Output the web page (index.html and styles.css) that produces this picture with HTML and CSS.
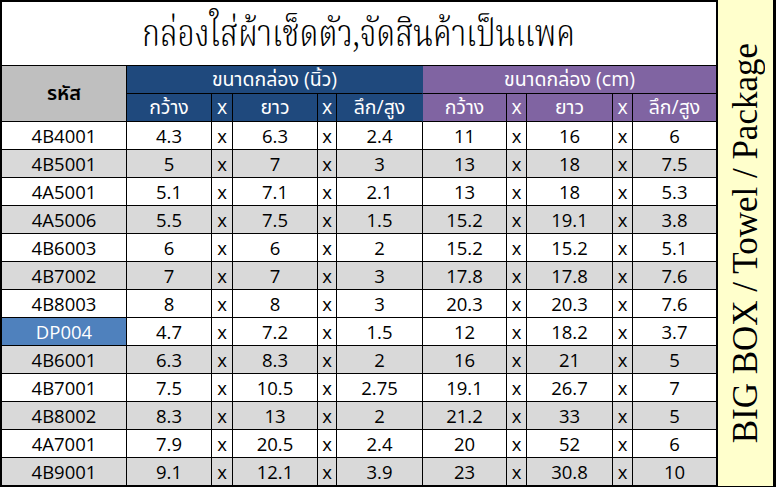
FILE: index.html
```html
<!DOCTYPE html>
<html lang="th">
<head>
<meta charset="utf-8">
<title>กล่องใส่ผ้าเช็ดตัว</title>
<link rel="stylesheet" href="styles.css">
</head>
<body>
<div class="sheet">
  <div class="grid">
    <div class="title"><span class="title-text">กล่องใส่ผ้าเช็ดตัว,จัดสินค้าเป็นแพค</span></div>

    <div class="hd code-hd">รหัส</div>
    <div class="hd blue group">ขนาดกล่อง (นิ้ว)</div>
    <div class="hd purple group last">ขนาดกล่อง (cm)</div>

    <div class="hd blue">กว้าง</div>
    <div class="hd blue">x</div>
    <div class="hd blue">ยาว</div>
    <div class="hd blue">x</div>
    <div class="hd blue join">ลึก/สูง</div>
    <div class="hd purple">กว้าง</div>
    <div class="hd purple">x</div>
    <div class="hd purple">ยาว</div>
    <div class="hd purple">x</div>
    <div class="hd purple last">ลึก/สูง</div>

    <div class="c">4B4001</div><div class="c">4.3</div><div class="c">x</div><div class="c">6.3</div><div class="c">x</div><div class="c">2.4</div><div class="c">11</div><div class="c">x</div><div class="c">16</div><div class="c">x</div><div class="c last">6</div>
    <div class="c g">4B5001</div><div class="c g">5</div><div class="c g">x</div><div class="c g">7</div><div class="c g">x</div><div class="c g">3</div><div class="c g">13</div><div class="c g">x</div><div class="c g">18</div><div class="c g">x</div><div class="c g last">7.5</div>
    <div class="c">4A5001</div><div class="c">5.1</div><div class="c">x</div><div class="c">7.1</div><div class="c">x</div><div class="c">2.1</div><div class="c">13</div><div class="c">x</div><div class="c">18</div><div class="c">x</div><div class="c last">5.3</div>
    <div class="c g">4A5006</div><div class="c g">5.5</div><div class="c g">x</div><div class="c g">7.5</div><div class="c g">x</div><div class="c g">1.5</div><div class="c g">15.2</div><div class="c g">x</div><div class="c g">19.1</div><div class="c g">x</div><div class="c g last">3.8</div>
    <div class="c">4B6003</div><div class="c">6</div><div class="c">x</div><div class="c">6</div><div class="c">x</div><div class="c">2</div><div class="c">15.2</div><div class="c">x</div><div class="c">15.2</div><div class="c">x</div><div class="c last">5.1</div>
    <div class="c g">4B7002</div><div class="c g">7</div><div class="c g">x</div><div class="c g">7</div><div class="c g">x</div><div class="c g">3</div><div class="c g">17.8</div><div class="c g">x</div><div class="c g">17.8</div><div class="c g">x</div><div class="c g last">7.6</div>
    <div class="c">4B8003</div><div class="c">8</div><div class="c">x</div><div class="c">8</div><div class="c">x</div><div class="c">3</div><div class="c">20.3</div><div class="c">x</div><div class="c">20.3</div><div class="c">x</div><div class="c last">7.6</div>
    <div class="c hl">DP004</div><div class="c">4.7</div><div class="c">x</div><div class="c">7.2</div><div class="c">x</div><div class="c">1.5</div><div class="c">12</div><div class="c">x</div><div class="c">18.2</div><div class="c">x</div><div class="c last">3.7</div>
    <div class="c g">4B6001</div><div class="c g">6.3</div><div class="c g">x</div><div class="c g">8.3</div><div class="c g">x</div><div class="c g">2</div><div class="c g">16</div><div class="c g">x</div><div class="c g">21</div><div class="c g">x</div><div class="c g last">5</div>
    <div class="c">4B7001</div><div class="c">7.5</div><div class="c">x</div><div class="c">10.5</div><div class="c">x</div><div class="c">2.75</div><div class="c">19.1</div><div class="c">x</div><div class="c">26.7</div><div class="c">x</div><div class="c last">7</div>
    <div class="c g">4B8002</div><div class="c g">8.3</div><div class="c g">x</div><div class="c g">13</div><div class="c g">x</div><div class="c g">2</div><div class="c g">21.2</div><div class="c g">x</div><div class="c g">33</div><div class="c g">x</div><div class="c g last">5</div>
    <div class="c">4A7001</div><div class="c">7.9</div><div class="c">x</div><div class="c">20.5</div><div class="c">x</div><div class="c">2.4</div><div class="c">20</div><div class="c">x</div><div class="c">52</div><div class="c">x</div><div class="c last">6</div>
    <div class="c g">4B9001</div><div class="c g">9.1</div><div class="c g">x</div><div class="c g">12.1</div><div class="c g">x</div><div class="c g">3.9</div><div class="c g">23</div><div class="c g">x</div><div class="c g">30.8</div><div class="c g">x</div><div class="c g last">10</div>
  </div>
  <div class="side"><span class="side-text">BIG BOX / Towel / Package</span></div>
</div>
</body>
</html>
```

FILE: styles.css
```css
html, body {
  margin: 0;
  padding: 0;
  background: #ffffff;
}

.sheet {
  width: 776px;
  height: 487px;
  box-sizing: border-box;
  display: flex;
  border-left: 2px solid #000;
  border-bottom: 1px solid #000;
  border-right: 3px solid #000;
  font-family: "Open Sans", "Noto Sans Thai", "Tahoma", "Loma", "Garuda", "Noto Sans", sans-serif;
}

.grid {
  display: grid;
  grid-template-columns: 125px 85px 21px 85px 19px 86px 84px 20px 86px 20px 84px;
  grid-template-rows: 64px 28px 28px repeat(13, 28px);
  border-top: 2px solid #000;
  width: 715px;
  flex: none;
}

.grid > div {
  box-sizing: border-box;
  border-right: 1px solid #000;
  border-bottom: 1px solid #000;
  display: flex;
  align-items: center;
  justify-content: center;
  white-space: nowrap;
  line-height: 1.1;
}

.title {
  grid-column: 1 / span 11;
  background: #fff;
  color: #000;
  padding-top: 6px;
}

.title-text {
  display: inline-block;
  font-family: "Noto Serif Thai", "Noto Sans Thai Looped", "Norasi", "Kinnari", "Noto Sans Thai", serif;
  font-size: 38px;
  font-weight: 300;
  transform: scaleX(0.8);
}

.hd {
  color: #fff;
  font-size: 19.5px;
  padding-bottom: 1px;
}

.code-hd {
  grid-row: 2 / span 2;
  background: #bfbfbf;
  color: #000;
  font-weight: 600;
  font-size: 20px;
}

.blue {
  background: #1f497d;
}

.purple {
  background: #8064a2;
}

.group {
  grid-column: span 5;
}

.blue.group,
.blue.join {
  border-right-color: #1f497d !important;
}

.c {
  font-size: 18.5px;
  color: #000;
  background: #fff;
  padding-top: 1px;
}

.c.g {
  background: #d9d9d9;
}

.c.hl {
  background: #4f81bd;
  color: #fff;
}

.side {
  flex: 1;
  background: #ffffcc;
  border-left: 1px solid #000;
  display: flex;
  align-items: center;
  justify-content: center;
}

.side-text {
  writing-mode: vertical-rl;
  transform: rotate(180deg);
  font-family: "Liberation Serif", "Times New Roman", serif;
  font-size: 35px;
  color: #000;
  white-space: nowrap;
  line-height: 1;
}
```
